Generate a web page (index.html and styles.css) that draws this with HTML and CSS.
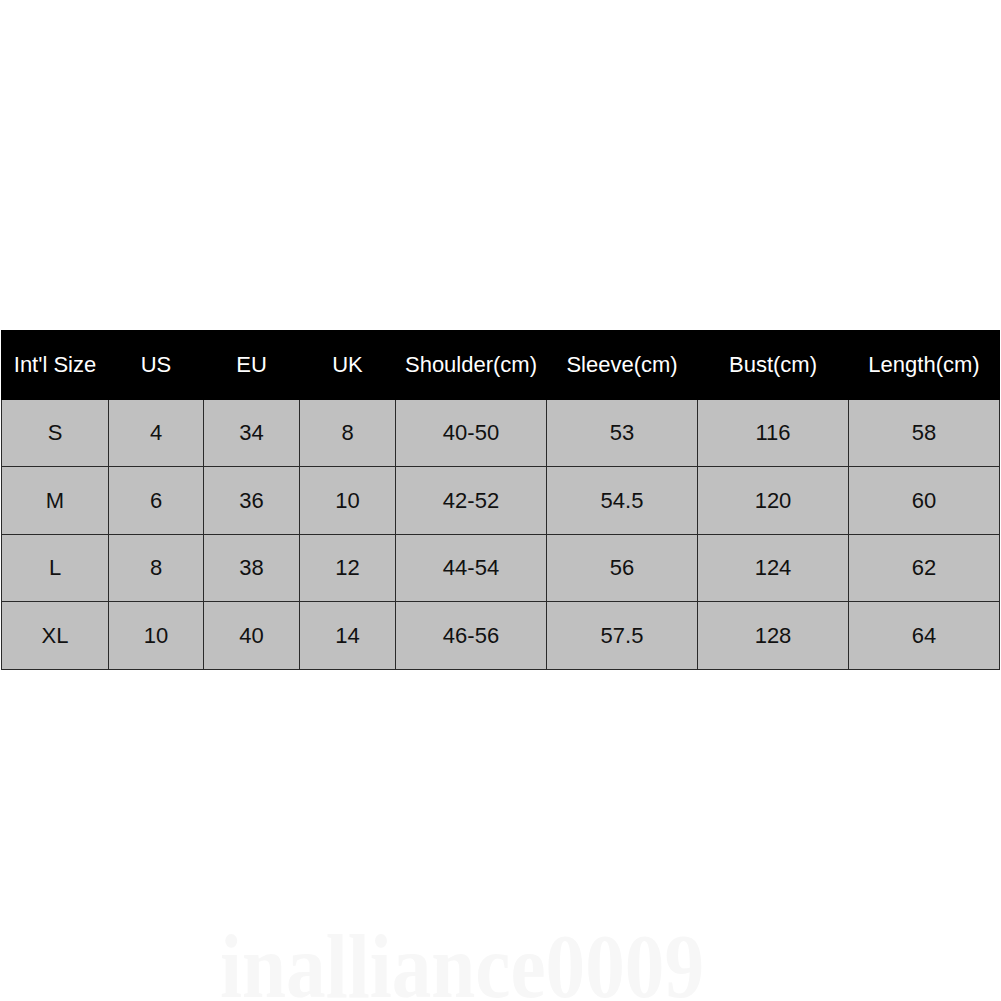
FILE: index.html
```html
<!DOCTYPE html>
<html>
<head>
<meta charset="utf-8">
<link rel="stylesheet" href="styles.css">
</head>
<body>
<div class="page">
  <table class="size-table">
    <colgroup>
      <col class="c1"><col class="c2"><col class="c3"><col class="c4">
      <col class="c5"><col class="c6"><col class="c7"><col class="c8">
    </colgroup>
    <thead>
      <tr>
        <th>Int'l Size</th><th>US</th><th>EU</th><th>UK</th>
        <th>Shoulder(cm)</th><th>Sleeve(cm)</th><th>Bust(cm)</th><th>Length(cm)</th>
      </tr>
    </thead>
    <tbody>
      <tr><td>S</td><td>4</td><td>34</td><td>8</td><td>40-50</td><td>53</td><td>116</td><td>58</td></tr>
      <tr><td>M</td><td>6</td><td>36</td><td>10</td><td>42-52</td><td>54.5</td><td>120</td><td>60</td></tr>
      <tr><td>L</td><td>8</td><td>38</td><td>12</td><td>44-54</td><td>56</td><td>124</td><td>62</td></tr>
      <tr><td>XL</td><td>10</td><td>40</td><td>14</td><td>46-56</td><td>57.5</td><td>128</td><td>64</td></tr>
    </tbody>
  </table>
  <div class="watermark">inalliance0009</div>
</div>
</body>
</html>
```

FILE: styles.css
```css
html, body {
  margin: 0;
  padding: 0;
  background: #ffffff;
}

.page {
  position: relative;
  width: 1001px;
  height: 1001px;
  padding: 330px 0 0 1px;
  box-sizing: border-box;
  overflow: hidden;
  font-family: "Liberation Sans", Arial, sans-serif;
}

.size-table {
  border-collapse: collapse;
  table-layout: fixed;
  width: 998px;
}

.c1 { width: 107px; }
.c2 { width: 95px; }
.c3 { width: 96px; }
.c4 { width: 96px; }
.c5 { width: 151px; }
.c6 { width: 151px; }
.c7 { width: 151px; }
.c8 { width: 151px; }

.size-table th {
  background: #000000;
  color: #ffffff;
  font-weight: normal;
  font-size: 22px;
  height: 68px;
  padding: 0;
  text-align: center;
  vertical-align: middle;
  border: 1px solid #000000;
  white-space: nowrap;
}

.size-table td {
  background: #c0c0c0;
  color: #111111;
  font-size: 22px;
  height: 66px;
  padding: 0;
  text-align: center;
  vertical-align: middle;
  border: 1px solid #2a2a2a;
}

.size-table tbody tr:nth-child(even) td {
  height: 67px;
}

.watermark {
  position: absolute;
  left: 220px;
  top: 922px;
  font-family: "Liberation Serif", "Times New Roman", serif;
  font-weight: bold;
  font-size: 90px;
  line-height: 1;
  color: #f7f7f7;
  transform: scaleX(0.88);
  transform-origin: left top;
  white-space: nowrap;
}
```
